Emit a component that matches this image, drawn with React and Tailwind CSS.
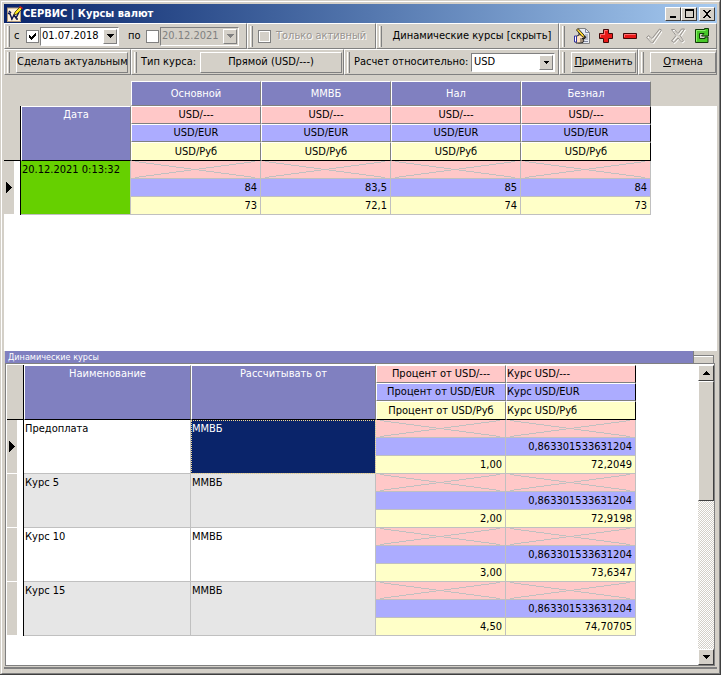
import React from "react";
import clsx from "clsx";

const raised = "border border-t-white border-l-white border-r-[#808080] border-b-[#808080]";
const sunken = "border border-t-[#808080] border-l-[#808080] border-r-white border-b-white";
const headCell = "p-0 font-normal border border-t-white border-l-white border-r-[#808080] border-b-[#808080]";
const dataCell = "p-0 border-r border-b border-[#c0c0c0]";

const rateTypes = [
  { name: "Основной", eur: "84", rub: "73" },
  { name: "ММВБ", eur: "83,5", rub: "72,1" },
  { name: "Нал", eur: "85", rub: "74" },
  { name: "Безнал", eur: "84", rub: "73" },
];

const dynamicRates = [
  { name: "Предоплата", base: "ММВБ", eur: "0,863301533631204", percent: "1,00", rub: "72,2049" },
  { name: "Курс 5", base: "ММВБ", eur: "0,863301533631204", percent: "2,00", rub: "72,9198" },
  { name: "Курс 10", base: "ММВБ", eur: "0,863301533631204", percent: "3,00", rub: "73,6347" },
  { name: "Курс 15", base: "ММВБ", eur: "0,863301533631204", percent: "4,50", rub: "74,70705" },
];

const currencies = [
  { code: "---", bg: "bg-[#ffc8c8]" },
  { code: "EUR", bg: "bg-[#acacff]" },
  { code: "Руб", bg: "bg-[#ffffc8]" },
];

const Arrow = ({ up, small, className = "text-black" }) => (
  <svg
    viewBox="0 0 7 4"
    className={clsx(small ? "w-[5px] h-[3px]" : "w-[7px] h-1", up && "rotate-180", className)}
    shapeRendering="crispEdges"
    fill="currentColor"
  >
    <path d="M0 0h7v1h-1v1h-1v1h-1v1h-1v-1h-1v-1h-1v-1h-1z" />
  </svg>
);

const AppIcon = () => (
  <svg viewBox="0 0 16 16" className="w-4 h-4 shrink-0">
    <rect x="0.5" y="2" width="13" height="13.500" fill="#fff0d8" stroke="#b09878" />
    <path d="M1 7l2 1 2 5 2-4 2 3 3-6M2 5l2 2M4 13h1M9 13h2" fill="none" stroke="#101850" strokeWidth="1.5" />
    <path d="M7 9l1-3 5-5 2 2-5 5z" fill="#ffe818" stroke="#201800" strokeWidth="0.7" />
    <path d="M13 0l3 2-1 1-3-2z" fill="#e02020" />
  </svg>
);

const EditIcon = () => (
  <svg viewBox="0 0 16 16" className="w-4 h-4">
    <path d="M4.500 0.500h7l4 4v11h-11z" fill="#e8ecf4" stroke="#808080" />
    <path d="M11.500 1v3.500h4M11 7h3M11 9h3M11 11h3M7 13.500h7" fill="none" stroke="#8088a0" />
    <path d="M2 8.500l4-2 3 1 3 1.500-1 1.500h-3l2 1-1 3-4 0.500H2z" fill="#ffe0c0" stroke="#181818" strokeWidth="0.900" />
    <path d="M6 11h4M6 13h3" stroke="#181818" strokeWidth="0.800" />
    <path d="M0.500 8h2v6h-2z" fill="#fff" stroke="#3030a0" />
    <path d="M4 0.500l6 6.500 1 3-3-1.500-5.500-6.500z" fill="#ffd830" stroke="#181818" strokeWidth="0.900" />
  </svg>
);

const PlusIcon = () => (
  <svg viewBox="0 0 16 16" className="w-4 h-4">
    <path d="M5.500 1.500h5v4h4v5h-4v4h-5v-4h-4v-5h4z" fill="#e81818" stroke="#400808" />
    <path d="M6.500 7V2.500h3M2.500 9V6.500h4" fill="none" stroke="#ff7070" />
  </svg>
);

const MinusIcon = () => (
  <svg viewBox="0 0 16 16" className="w-4 h-4">
    <path d="M1.500 5.500h13v5h-13z" fill="#e81818" stroke="#400808" />
    <path d="M2.500 9V6.500h11" fill="none" stroke="#ff7070" />
  </svg>
);

const CheckIcon = () => (
  <svg viewBox="0 0 16 16" className="w-4 h-4" fill="none">
    <path d="M0.500 9.500l2-2 3.500 3 7.500-9.500 2 1-9 13h-1z" stroke="#fff" transform="translate(1 1)" />
    <path d="M0.500 9.500l2-2 3.500 3 7.500-9.500 2 1-9 13h-1z" stroke="#989490" />
  </svg>
);

const CrossIcon = () => {
  const d = "M1.500 1.500h3l3.500 4 3.500-4.500h3l-4.500 6.500 3.500 5-2 1.500-3.500-4-4 4.500-2.500-1.500 4.500-5.500z";
  return (
    <svg viewBox="0 0 16 16" className="w-4 h-4" fill="none">
      <path d={d} stroke="#fff" transform="translate(1 1)" />
      <path d={d} stroke="#989490" />
    </svg>
  );
};

const RefreshIcon = () => (
  <svg viewBox="0 0 16 16" className="w-4 h-4">
    <path
      d="M1.500 1.500h9v-1l4 0v7.500h-7l2.500-2.500h-4.500v5h5.500v-1.500h3v5.500h-12.500z"
      fill="#48c828"
      stroke="#103808"
    />
    <path d="M2.500 13.500v-11h9" fill="none" stroke="#90f070" />
  </svg>
);

const Band = ({ className, children }) => (
  <div className={clsx("flex items-center h-[26px] pl-[2px]", raised, className)}>
    <span className="w-[3px] h-[21px] shrink-0 border-l border-r border-l-white border-r-[#808080]" />
    {children}
  </div>
);

const CheckBox = ({ label, checked, disabled }) => (
  <span className="grid w-[13px] h-[13px] shrink-0 place-items-center">
    <input
      type="checkbox"
      aria-label={label}
      defaultChecked={checked}
      disabled={disabled}
      className="[grid-area:1/1] appearance-none w-[13px] h-[13px] bg-white border border-[#808080] disabled:bg-[#d4d0c8] disabled:shadow-[inset_0_0_0_1px_#fff]"
    />
    {checked && (
      <svg viewBox="0 0 7 7" className="[grid-area:1/1] w-[7px] h-[7px] pointer-events-none" shapeRendering="crispEdges">
        <path d="M0 2h1v1h1v1h1v-1h1v-1h1v-1h1v-1h1v3h-1v1h-1v1h-1v1h-1v1h-1v-1h-1v-1h-1z" />
      </svg>
    )}
  </span>
);

const DateBox = ({ label, value, disabled }) => (
  <div
    className={clsx(
      "flex w-[79px] h-[19px] p-px border border-[#808080] border-r-white border-b-white",
      disabled ? "bg-[#d4d0c8]" : "bg-white"
    )}
  >
    <input
      type="text"
      aria-label={label}
      defaultValue={value}
      disabled={disabled}
      className="flex-1 min-w-0 bg-transparent outline-none disabled:text-[#808080]"
    />
    <button
      aria-label={label + ": календарь"}
      disabled={disabled}
      className={clsx("grid place-items-center w-[14px] h-[15px] bg-[#d4d0c8]", raised)}
    >
      <Arrow className={disabled ? "text-[#808080]" : "text-black"} />
    </button>
  </div>
);

const PushButton = ({ className, children }) => (
  <button className={clsx("h-[21px] bg-[#d4d0c8] whitespace-nowrap text-center", raised, className)}>{children}</button>
);

const EmptyMark = () => (
  <svg
    viewBox="0 0 129 17"
    preserveAspectRatio="none"
    className="block w-full h-[17px]"
    stroke="#c0c0c0"
    shapeRendering="crispEdges"
  >
    <path d="M4 0.500L124 16.500M4 16.500L124 0.500" />
  </svg>
);

const RowMarker = ({ active }) => (
  <td rowSpan={3} className="p-0 align-top bg-white border-r border-black">
    <div className="grid w-[10px] h-[53px] place-items-center bg-[#d4d0c8]">
      {active && (
        <svg viewBox="0 0 6 11" className="w-[6px] h-[11px]" shapeRendering="crispEdges">
          <path d="M0 0l6 5.500-6 5.500z" />
        </svg>
      )}
    </div>
  </td>
);

const WindowButton = ({ label, d, className }) => (
  <button
    aria-label={label}
    className={clsx(
      "grid place-items-center w-4 h-[14px] bg-[#d4d0c8] border border-t-white border-l-white border-r-[#404040] border-b-[#404040]",
      className
    )}
  >
    <svg viewBox="0 0 10 10" className="w-[10px] h-[10px]" shapeRendering="crispEdges">
      <path d={d} fillRule="evenodd" />
    </svg>
  </button>
);

const TitleBar = () => (
  <header className="flex items-center h-[19px] shrink-0 pl-[3px] pr-[2px] bg-linear-to-r from-[#0a246a] to-[#a6caf0]">
    <AppIcon />
    <h1 className="flex-1 text-[11px] font-bold text-white whitespace-nowrap">СЕРВИС | Курсы валют</h1>
    <WindowButton label="Свернуть" d="M2 7h6v2h-6z" />
    <WindowButton label="Развернуть" d="M1 0h9v9h-9zM2 2v6h7v-6z" />
    <WindowButton
      label="Закрыть"
      className="ml-[2px]"
      d="M1 1h2v1h1v1h2v-1h1v-1h2v1h-1v1h-1v1h-1v2h1v1h1v1h1v1h-2v-1h-1v-1h-2v1h-1v1h-2v-1h1v-1h1v-1h1v-2h-1v-1h-1v-1h-1z"
    />
  </header>
);

const tools = [
  { label: "Изменить", Icon: EditIcon },
  { label: "Добавить", Icon: PlusIcon },
  { label: "Удалить", Icon: MinusIcon },
  { label: "Сохранить", Icon: CheckIcon, disabled: true },
  { label: "Отменить", Icon: CrossIcon, disabled: true },
  { label: "Обновить", Icon: RefreshIcon },
];

const Toolbar = () => (
  <div className="shrink-0 whitespace-nowrap">
    <div className="flex">
      <Band className="w-[243px]">
        <span className="w-4 pl-1">с</span>
        <CheckBox label="Дата с" checked />
        <span className="w-px" />
        <DateBox label="с" value="01.07.2018" />
        <span className="w-[27px] pl-[9px]">по</span>
        <CheckBox label="Дата по" />
        <span className="w-px" />
        <DateBox label="по" value="20.12.2021" disabled />
      </Band>
      <Band className="w-[129px]">
        <label className="flex items-center gap-[5px] pl-[5px] text-[#989490] [text-shadow:1px_1px_#fff]">
          <CheckBox label="Только активный" disabled />
          Только активный
        </label>
      </Band>
      <Band className="w-[183px]">
        <button className="flex-1 pl-1 text-center">Динамические курсы [скрыть]</button>
      </Band>
      <Band className="flex-1">
        <div className="flex gap-2 pl-[9px]">
          {tools.map(({ label, Icon, disabled }) => (
            <button key={label} aria-label={label} disabled={disabled}>
              <Icon />
            </button>
          ))}
        </div>
      </Band>
    </div>
    <div className="flex">
      <Band className="w-[127px]">
        <PushButton className="ml-[6px] w-[112px]">Сделать актуальным</PushButton>
      </Band>
      <Band className="w-[213px]">
        <span className="w-[63px] pl-1">Тип курса:</span>
        <PushButton className="w-[142px]">Прямой (USD/---)</PushButton>
      </Band>
      <Band className="w-[215px]">
        <label htmlFor="base" className="w-[121px] pl-1">
          Расчет относительно:
        </label>
        <div className={clsx("grid w-[84px] h-[19px] items-center bg-white", sunken)}>
          <select id="base" className="[grid-area:1/1] appearance-none w-full h-full pl-[2px] bg-transparent outline-none">
            <option>USD</option>
          </select>
          <span
            className={clsx(
              "[grid-area:1/1] justify-self-end grid place-items-center w-[14px] h-[15px] mr-px bg-[#d4d0c8] pointer-events-none",
              raised
            )}
          >
            <Arrow small />
          </span>
        </div>
      </Band>
      <Band className="w-[79px]">
        <PushButton className="ml-[6px] w-[65px]">
          <u>П</u>рименить
        </PushButton>
      </Band>
      <Band className="flex-1">
        <PushButton className="ml-[6px] flex-1">
          <u>О</u>тмена
        </PushButton>
      </Band>
    </div>
  </div>
);

const RatesTable = () => (
  <table className="w-full table-fixed border-separate border-spacing-0">
    <colgroup>
      <col className="w-[17px]" />
      <col className="w-[110px]" />
      {rateTypes.map((type) => (
        <col key={type.name} className="w-[130px]" />
      ))}
      <col />
    </colgroup>
    <thead>
      <tr className="h-[25px] bg-[#d4d0c8]">
        <td colSpan={2} className="p-0" />
        {rateTypes.map((type) => (
          <th key={type.name} className={clsx(headCell, "bg-[#8080c0] text-white leading-4")}>
            {type.name}
          </th>
        ))}
        <td className="p-0" />
      </tr>
      {currencies.map((currency, row) => (
        <tr key={currency.code} className={row === 2 ? "h-[19px]" : "h-[18px]"}>
          {row === 0 && (
            <>
              <td rowSpan={3} className="p-0 bg-[#d4d0c8] border-r border-b border-black" />
              <th rowSpan={3} className={clsx(headCell, "align-top bg-[#8080c0] text-white leading-4 border-b-black")}>
                Дата
              </th>
            </>
          )}
          {rateTypes.map((type, col) => (
            <th
              key={type.name}
              className={clsx(
                headCell,
                currency.bg,
                "leading-4",
                row === 2 && "border-b-black",
                col === rateTypes.length - 1 && "border-r-black"
              )}
            >
              USD/{currency.code}
            </th>
          ))}
        </tr>
      ))}
    </thead>
    <tbody className="leading-[17px]">
      <tr className="h-[18px]">
        <RowMarker active />
        <td rowSpan={3} className={clsx(dataCell, "pl-px align-top bg-[#66d000] whitespace-nowrap")}>
          20.12.2021 0:13:32
        </td>
        {rateTypes.map((type) => (
          <td key={type.name} className={clsx(dataCell, "bg-[#ffc8c8]")}>
            <EmptyMark />
          </td>
        ))}
      </tr>
      <tr className="h-[18px] text-right">
        {rateTypes.map((type) => (
          <td key={type.name} className={clsx(dataCell, "pr-[3px] bg-[#acacff]")}>
            {type.eur}
          </td>
        ))}
      </tr>
      <tr className="h-[18px] text-right">
        {rateTypes.map((type) => (
          <td key={type.name} className={clsx(dataCell, "pr-[3px] bg-[#ffffc8]")}>
            {type.rub}
          </td>
        ))}
      </tr>
    </tbody>
  </table>
);

const DynamicTable = () => (
  <table className="w-[629px] table-fixed border-separate border-spacing-0">
    <colgroup>
      <col className="w-[17px]" />
      <col className="w-[167px]" />
      <col className="w-[185px]" />
      <col className="w-[130px]" />
      <col className="w-[130px]" />
    </colgroup>
    <thead>
      {currencies.map((currency, row) => (
        <tr key={currency.code} className={row === 2 ? "h-[19px]" : "h-[18px]"}>
          {row === 0 && (
            <>
              <td rowSpan={3} className="p-0 bg-[#d4d0c8] border-r border-b border-black" />
              <th rowSpan={3} className={clsx(headCell, "align-top bg-[#8080c0] text-white leading-4 border-b-black")}>
                Наименование
              </th>
              <th rowSpan={3} className={clsx(headCell, "align-top bg-[#8080c0] text-white leading-4 border-b-black")}>
                Рассчитывать от
              </th>
            </>
          )}
          <th className={clsx(headCell, currency.bg, "leading-4", row === 2 && "border-b-black")}>
            Процент от USD/{currency.code}
          </th>
          <th className={clsx(headCell, currency.bg, "leading-4 text-left border-r-black", row === 2 && "border-b-black")}>
            Курс USD/{currency.code}
          </th>
        </tr>
      ))}
    </thead>
    {dynamicRates.map((rate, index) => (
      <tbody key={rate.name} className="leading-[17px]">
        <tr className="h-[18px]">
          <RowMarker active={index === 0} />
          <td rowSpan={3} className={clsx(dataCell, "pl-px align-top", index % 2 ? "bg-[#e6e6e6]" : "bg-white")}>
            {rate.name}
          </td>
          <td
            rowSpan={3}
            className={clsx(
              dataCell,
              "align-top",
              index === 0
                ? "bg-[#0a246a] text-white outline outline-dotted outline-[#f5db95] -outline-offset-1"
                : index % 2
                  ? "bg-[#e6e6e6]"
                  : "bg-white"
            )}
          >
            <span className="pl-px">{rate.base}</span>
          </td>
          <td className={clsx(dataCell, "bg-[#ffc8c8]")}>
            <EmptyMark />
          </td>
          <td className={clsx(dataCell, "bg-[#ffc8c8]")}>
            <EmptyMark />
          </td>
        </tr>
        <tr className="h-[18px] text-right">
          <td className={clsx(dataCell, "bg-[#acacff]")} />
          <td className={clsx(dataCell, "pr-[3px] bg-[#acacff]")}>{rate.eur}</td>
        </tr>
        <tr className="h-[18px] text-right">
          <td className={clsx(dataCell, "pr-[3px] bg-[#ffffc8]")}>{rate.percent}</td>
          <td className={clsx(dataCell, "pr-[3px] bg-[#ffffc8]")}>{rate.rub}</td>
        </tr>
      </tbody>
    ))}
  </table>
);

const ScrollBar = () => {
  const block = "bg-[#d4d0c8] border border-t-white border-l-white border-r-[#404040] border-b-[#404040]";
  return (
    <div className="flex flex-col w-4 shrink-0 bg-[conic-gradient(#fff_25%,#d4d0c8_0_50%,#fff_0_75%,#d4d0c8_0)] bg-[size:2px_2px]">
      <button aria-label="Вверх" className={clsx("grid place-items-center h-4", block)}>
        <Arrow up />
      </button>
      <div className={clsx("h-[120px]", block)} />
      <button aria-label="Вниз" className={clsx("mt-auto grid place-items-center h-4", block)}>
        <Arrow />
      </button>
    </div>
  );
};

export default function App() {
  return (
    <div className="min-h-screen flex bg-[#d4d0c8] border-r border-b border-[#404040] pl-px pt-px font-['DejaVu_Sans_Condensed','DejaVu_Sans',sans-serif] text-[11px] leading-4 text-black">
      <div className="flex-1 min-w-0 flex flex-col border border-t-white border-l-white border-r-[#808080] border-b-[#808080] pl-[2px] pt-[2px] pr-[2px] pb-1">
        <TitleBar />
        <Toolbar />

        {/* Main rates */}
        <section className="flex-[270] bg-white border-t-[6px] border-[#d4d0c8] overflow-hidden">
          <RatesTable />
        </section>

        {/* Dynamic rates */}
        <section className="flex-[316] flex flex-col pl-px border-b-2 border-[#808080]">
          <div className="flex h-3 shrink-0">
            <h2 className="flex-1 h-3 pl-[3px] bg-[#8080c0] text-[9px] leading-3 text-white">Динамические курсы</h2>
            <div className="w-[24px] border-l border-[#808080] pt-1">
              <div className="h-2 mr-[3px] border-t border-r border-[#808080] shadow-[inset_0_1px_#fff]" />
            </div>
          </div>
          <div className="flex-1 flex mr-[2px] mb-px bg-white border border-[#808080] pl-px pt-px">
            <div className="flex-1 min-w-0 overflow-hidden">
              <DynamicTable />
            </div>
            <ScrollBar />
          </div>
        </section>
      </div>
    </div>
  );
}
